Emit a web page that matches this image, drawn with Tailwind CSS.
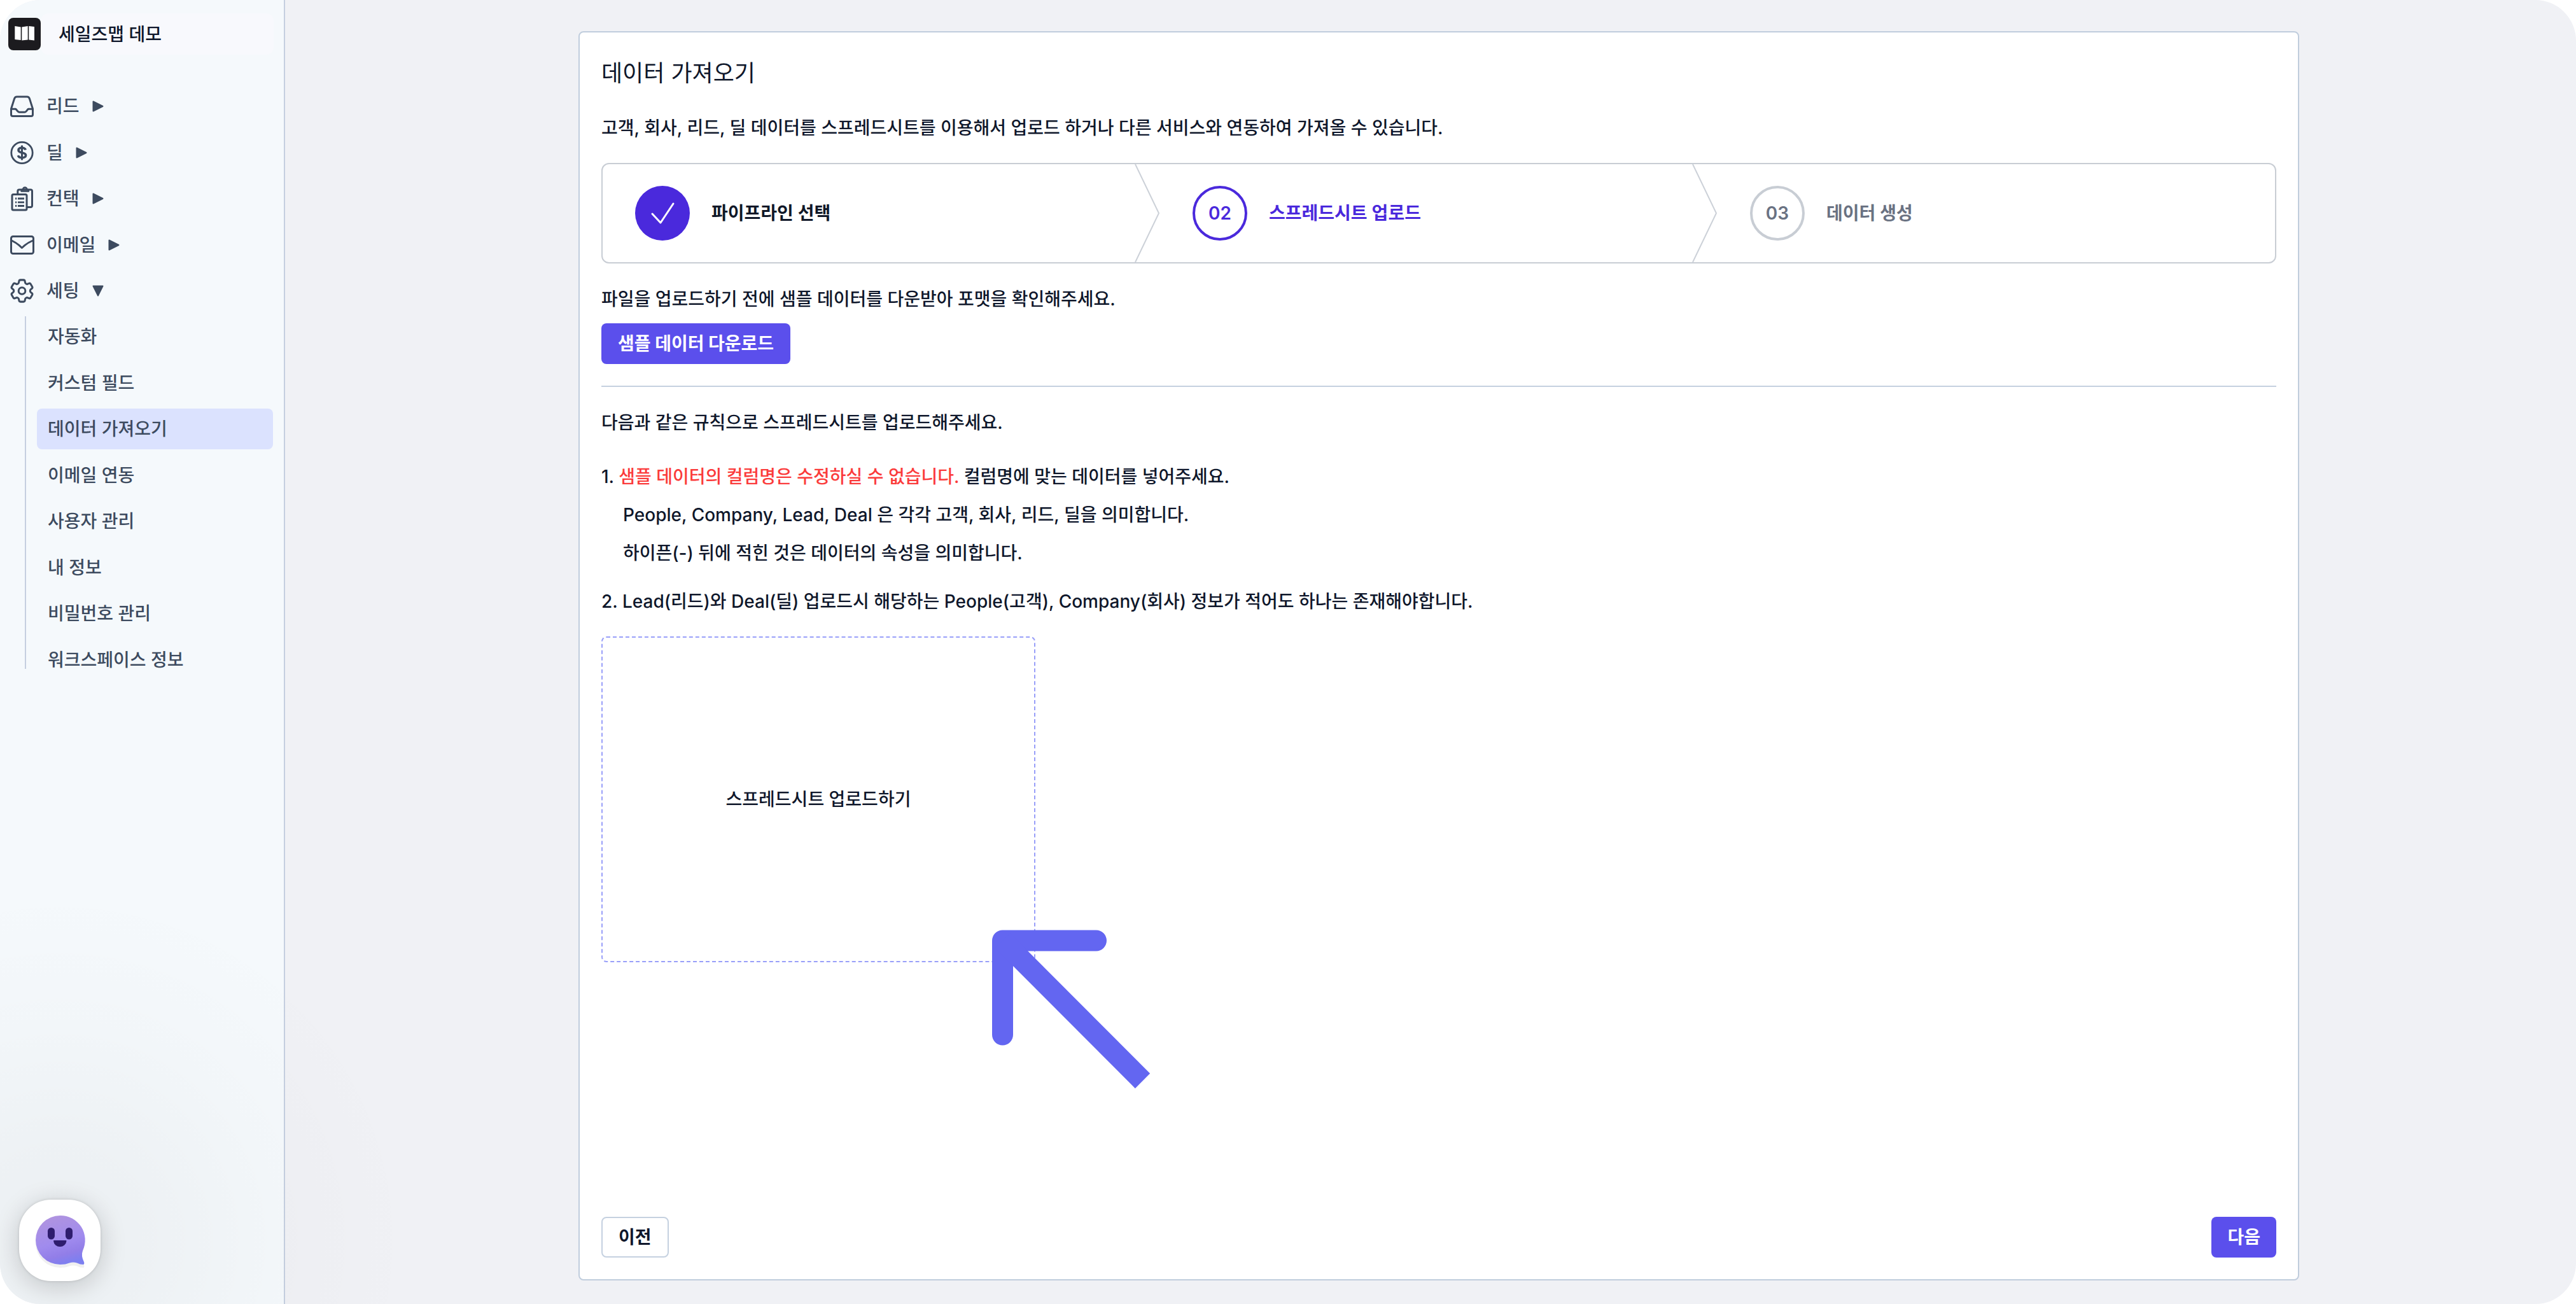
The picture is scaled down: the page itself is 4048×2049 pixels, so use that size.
<!DOCTYPE html>
<html lang="ko">
<head>
<meta charset="utf-8">
<meta name="viewport" content="width=device-width, initial-scale=1">
<title>데이터 가져오기</title>
<script src="https://cdn.jsdelivr.net/npm/@tailwindcss/browser@4"></script>
</head>
<body class="bg-white font-['Inter','Noto_Sans_CJK_KR',sans-serif] text-[28px] leading-[40px] font-medium text-slate-900">
<div class="relative flex min-h-screen overflow-hidden rounded-[64px] bg-[#f0f1f5]">

  <aside class="w-[448px] shrink-0 border-r-2 border-[#c5cfe0] bg-[#f5f9fc] text-[#3d4b5f]">
    <div class="flex items-center pt-[21px] pr-[16px] pl-[13px]">
      <svg class="size-[51px] shrink-0" viewBox="0 0 51 51" aria-hidden="true">
        <rect width="51" height="51" rx="8" fill="#1c1b1f"/>
        <path fill="#fff" d="M10.300 13l9.400 1.500v20.500l-9.400-1zM21.300 14.500l9.400-1.500v21.500l-9.400 1zM32.300 13l8.700 1v21.500l-8.700-1z"/>
      </svg>
      <div class="flex h-[65px] grow items-center rounded-[12px] bg-[#f8f9fd] pl-[28px] text-slate-900">세일즈맵 데모</div>
    </div>

    <nav class="pt-[49px]">
      <ul class="flex h-[354px] flex-col justify-between pl-[15px]">
        <li><a href="#" class="flex h-[64px] items-center gap-[18px]">
          <svg class="size-[40px]" viewBox="0 0 40 40" fill="none" stroke="currentColor" stroke-width="3" stroke-linejoin="round" aria-hidden="true">
            <path d="M2.500 24L7.600 8Q8.600 5 11.500 5h16q2.900 0 3.900 3l5.100 16v9q0 2.500-2.500 2.500H5q-2.500 0-2.500-2.500z"/>
            <path d="M2.500 24.300h7.200l3.300 3.800q1 1.200 2.500 1.200h8q1.500 0 2.500-1.200l3.300-3.800h7.200"/>
          </svg>
          <span>리드</span>
          <svg class="ml-[2px] size-[18px]" viewBox="0 0 18 18" aria-hidden="true"><path d="M1.500 1.500v15L16.500 9z" fill="currentColor" stroke="currentColor" stroke-width="2" stroke-linejoin="round"/></svg>
        </a></li>
        <li><a href="#" class="flex h-[64px] items-center gap-[18px]">
          <svg class="size-[40px]" viewBox="0 0 40 40" fill="none" stroke="currentColor" stroke-width="2.800" aria-hidden="true">
            <circle cx="19.500" cy="20" r="16.700"/>
            <path stroke-width="3.600" d="M25.300 15.500c-.8-2.300-3-3.300-5.800-3.300-3.200 0-5.500 1.300-5.500 3.700 0 5.400 11.600 2.600 11.600 8 0 2.500-2.600 3.900-6 3.900-3 0-5.500-1.200-6.200-3.600"/>
            <path stroke-width="3" d="M19.500 8.500v23"/>
          </svg>
          <span>딜</span>
          <svg class="ml-[2px] size-[18px]" viewBox="0 0 18 18" aria-hidden="true"><path d="M1.500 1.500v15L16.500 9z" fill="currentColor" stroke="currentColor" stroke-width="2" stroke-linejoin="round"/></svg>
        </a></li>
        <li><a href="#" class="flex h-[64px] items-center gap-[18px]">
          <svg class="size-[40px]" viewBox="0 0 40 40" fill="none" stroke="currentColor" stroke-width="3" stroke-linejoin="round" aria-hidden="true">
            <path d="M12.800 12V8.500q0-2.500 2.500-2.500H33q2.500 0 2.500 2.500V31q0 2.500-2.500 2.500h-5"/>
            <path fill="currentColor" fill-opacity="0.500" stroke-width="2.400" d="M18.500 8.500q0-2.500 2.500-3 .6-3 3.200-3t3.200 3q2.600.5 2.600 3z"/>
            <rect x="4" y="13.500" width="23" height="24.500" rx="2"/>
            <path stroke-width="2.800" d="M9 20h2.200M13 20H23M9 25.800h2.200M13 25.800H23M9 31.500h2.200M13 31.500H23"/>
          </svg>
          <span>컨택</span>
          <svg class="ml-[2px] size-[18px]" viewBox="0 0 18 18" aria-hidden="true"><path d="M1.500 1.500v15L16.500 9z" fill="currentColor" stroke="currentColor" stroke-width="2" stroke-linejoin="round"/></svg>
        </a></li>
        <li><a href="#" class="flex h-[64px] items-center gap-[18px]">
          <svg class="size-[40px]" viewBox="0 0 40 40" fill="none" stroke="currentColor" stroke-width="3" stroke-linejoin="round" aria-hidden="true">
            <rect x="2.500" y="6.500" width="35" height="27" rx="3"/>
            <path d="M2.500 12.500q8 4 12.500 7.800l4.400 4.200 4.600-4.200q5-4 13.500-7.800"/>
          </svg>
          <span>이메일</span>
          <svg class="ml-[2px] size-[18px]" viewBox="0 0 18 18" aria-hidden="true"><path d="M1.500 1.500v15L16.500 9z" fill="currentColor" stroke="currentColor" stroke-width="2" stroke-linejoin="round"/></svg>
        </a></li>
        <li><a href="#" class="flex h-[64px] items-center gap-[18px]" aria-expanded="true">
          <svg class="size-[40px]" viewBox="1.750 1.500 21 21" fill="none" stroke="currentColor" stroke-width="1.600" stroke-linejoin="round" aria-hidden="true">
            <path d="M9.594 3.940c.09-.542.56-.94 1.110-.94h2.593c.55 0 1.020.398 1.110.94l.213 1.281c.063.374.313.686.645.87.074.04.147.083.22.127.325.196.72.257 1.075.124l1.217-.456a1.125 1.125 0 0 1 1.370.49l1.296 2.247a1.125 1.125 0 0 1-.26 1.431l-1.003.827c-.293.241-.438.613-.43.992a7.723 7.723 0 0 1 0 .255c-.008.378.137.75.43.991l1.004.827c.424.35.534.955.26 1.430l-1.298 2.247a1.125 1.125 0 0 1-1.369.491l-1.217-.456c-.355-.133-.75-.072-1.076.124a6.470 6.470 0 0 1-.22.128c-.331.183-.581.495-.644.869l-.213 1.281c-.09.543-.56.94-1.110.94h-2.594c-.55 0-1.019-.398-1.110-.94l-.213-1.281c-.062-.374-.312-.686-.644-.87a6.520 6.520 0 0 1-.22-.127c-.325-.196-.72-.257-1.076-.124l-1.217.456a1.125 1.125 0 0 1-1.369-.49l-1.297-2.247a1.125 1.125 0 0 1 .26-1.431l1.004-.827c.292-.24.437-.613.43-.991a6.932 6.932 0 0 1 0-.255c.007-.38-.138-.751-.43-.992l-1.004-.827a1.125 1.125 0 0 1-.26-1.430l1.297-2.247a1.125 1.125 0 0 1 1.370-.491l1.216.456c.356.133.751.072 1.076-.124.072-.044.146-.086.22-.128.332-.183.582-.495.644-.869l.214-1.280Z"/>
            <circle cx="12" cy="12" r="2.800"/>
          </svg>
          <span>세팅</span>
          <svg class="ml-[2px] size-[18px]" viewBox="0 0 18 18" aria-hidden="true"><path d="M1.500 1.500h15L9 16.500z" fill="currentColor" stroke="currentColor" stroke-width="2" stroke-linejoin="round"/></svg>
        </a></li>
      </ul>

      <div class="mt-[8px] flex gap-[17px] pr-[17px] pl-[39px]">
        <div class="mb-[18px] w-[2px] bg-[#c5cfe0]"></div>
        <ul class="flex h-[572px] grow flex-col justify-between">
          <li><a href="#" class="flex h-[64px] items-center rounded-[8px] pl-[17px]">자동화</a></li>
          <li><a href="#" class="flex h-[64px] items-center rounded-[8px] pl-[17px]">커스텀 필드</a></li>
          <li><a href="#" class="flex h-[64px] items-center rounded-[8px] bg-[#dbe2fe] pl-[17px]" aria-current="page">데이터 가져오기</a></li>
          <li><a href="#" class="flex h-[64px] items-center rounded-[8px] pl-[17px]">이메일 연동</a></li>
          <li><a href="#" class="flex h-[64px] items-center rounded-[8px] pl-[17px]">사용자 관리</a></li>
          <li><a href="#" class="flex h-[64px] items-center rounded-[8px] pl-[17px]">내 정보</a></li>
          <li><a href="#" class="flex h-[64px] items-center rounded-[8px] pl-[17px]">비밀번호 관리</a></li>
          <li><a href="#" class="flex h-[64px] items-center rounded-[8px] pl-[17px]">워크스페이스 정보</a></li>
        </ul>
      </div>
    </nav>
  </aside>

  <main class="flex grow justify-center pt-[49px] pb-[37px] pl-[26px]">
    <section class="flex w-full max-w-[2704px] flex-col rounded-[8px] border-2 border-[#c0cddd] bg-white px-[34px] pt-[40px] pb-[34px]">
      <h1 class="text-[36px] leading-[48px] font-normal">데이터 가져오기</h1>
      <p class="mt-[42px]">고객, 회사, 리드, 딜 데이터를 스프레드시트를 이용해서 업로드 하거나 다른 서비스와 연동하여 가져올 수 있습니다.</p>

      <ol class="mt-[35px] grid grid-cols-3 rounded-[12px] border-2 border-[#c8cdd4]">
        <li class="flex h-[154px] items-center gap-[34px] pl-[51px] font-semibold text-gray-900">
          <span class="flex size-[86px] items-center justify-center rounded-full bg-[#4a29dc]">
            <svg class="size-[50px]" viewBox="0 0 50 50" fill="none" stroke="#fff" stroke-width="3" stroke-linecap="round" stroke-linejoin="round" aria-hidden="true"><path d="M9 26l13 14L42 10"/></svg>
          </span>
          파이프라인 선택
          <svg class="ml-auto h-full w-[40px]" viewBox="0 0 40 154" fill="none" stroke="#ccd1d8" stroke-width="2" aria-hidden="true"><path d="M1 0l37 77L1 154"/></svg>
        </li>
        <li class="flex h-[154px] items-center gap-[34px] pl-[51px] font-semibold text-[#4a29dc]" aria-current="step">
          <span class="flex size-[86px] items-center justify-center rounded-full border-4 border-[#4a29dc]">02</span>
          스프레드시트 업로드
          <svg class="ml-auto h-full w-[40px]" viewBox="0 0 40 154" fill="none" stroke="#ccd1d8" stroke-width="2" aria-hidden="true"><path d="M1 0l37 77L1 154"/></svg>
        </li>
        <li class="flex h-[154px] items-center gap-[34px] pl-[51px] font-semibold text-gray-500">
          <span class="flex size-[86px] items-center justify-center rounded-full border-4 border-[#c8cdd4]">03</span>
          데이터 생성
        </li>
      </ol>

      <p class="mt-[36px]">파일을 업로드하기 전에 샘플 데이터를 다운받아 포맷을 확인해주세요.</p>
      <button type="button" class="mt-[18px] h-[64px] self-start rounded-[8px] bg-[#5b4fec] px-[26px] font-bold text-white">샘플 데이터 다운로드</button>
      <hr class="mt-[34px] border-t-2 border-[#c5d1e0]">

      <p class="mt-[36px]">다음과 같은 규칙으로 스프레드시트를 업로드해주세요.</p>
      <div class="mt-[35px] leading-[60px]">
        <p>1. <span class="text-[#fb3b3b]">샘플 데이터의 컬럼명은 수정하실 수 없습니다.</span> 컬럼명에 맞는 데이터를 넣어주세요.</p>
        <p class="pl-[34px]">People, Company, Lead, Deal 은 각각 고객, 회사, 리드, 딜을 의미합니다.</p>
        <p class="pl-[34px]">하이픈(-) 뒤에 적힌 것은 데이터의 속성을 의미합니다.</p>
        <p class="mt-[16px]">2. Lead(리드)와 Deal(딜) 업로드시 해당하는 People(고객), Company(회사) 정보가 적어도 하나는 존재해야합니다.</p>
      </div>

      <div class="relative mt-[25px] mb-[34px] self-start">
        <label for="sheet" class="flex h-[512px] w-[682px] items-center justify-center rounded-[8px] border-2 border-dashed border-[#999ff9]">스프레드시트 업로드하기</label>
        <input id="sheet" type="file" class="sr-only">
        <svg class="absolute top-[461px] left-[614px] h-[250px] w-[250px]" viewBox="0 0 250 250" fill="none" stroke="#6366f1" stroke-width="33" stroke-linejoin="round" aria-hidden="true">
          <path stroke-linecap="round" d="M163.500 17H16.500v148"/><path d="M16.500 17l220 220.500"/>
        </svg>
      </div>

      <div class="mt-auto flex justify-between">
        <button type="button" class="h-[64px] rounded-[8px] border-2 border-[#c5d1e0] px-[25px] font-bold">이전</button>
        <button type="button" class="h-[64px] rounded-[8px] bg-[#5b4fec] px-[25px] font-bold text-white">다음</button>
      </div>
    </section>
  </main>

  <!-- soft glow behind the chat launcher -->
  <div class="pointer-events-none absolute bottom-[-460px] left-[-466px] size-[1120px] rounded-full bg-[radial-gradient(closest-side,rgba(0,0,0,0.040),rgba(0,0,0,0.030)_25%,rgba(0,0,0,0.010)_62%,transparent)]"></div>
  <button type="button" aria-label="채팅 상담" class="absolute bottom-[36px] left-[30px] size-[128px] rounded-[50px] bg-white shadow-[0_8px_40px_rgba(0,0,0,0.18),0_0_4px_rgba(0,0,0,0.15)]">
    <svg viewBox="0 0 128 128" aria-hidden="true">
      <defs>
        <linearGradient id="bubble" x1="0.300" y1="0" x2="0.600" y2="1">
          <stop offset="0" stop-color="#b094df"/><stop offset="0.550" stop-color="#a08bee"/><stop offset="0.800" stop-color="#927ee8"/><stop offset="1" stop-color="#7c7ff0"/>
        </linearGradient>
      </defs>
      <path fill="#000" opacity="0.060" transform="translate(0 5)" d="M64.500 25A38.300 38.300 0 0 0 64.500 102Q73 102 79 99.500Q85 97.500 91 99.500Q96 102 101 102Q103 101 102 98Q97 88 99 80A38.300 38.300 0 0 0 64.500 25z"/>
      <path fill="url(#bubble)" d="M64.500 25A38.500 38.500 0 0 0 64.500 102Q73 102 79 99.500Q85 97.500 91 99.500Q96 102 101 102Q103 101 102 98Q97 88 100 80A38.500 38.500 0 0 0 64.500 25z"/>
      <g fill="#2f1d6e"><rect x="45" y="44" width="11" height="18.500" rx="5.500"/><rect x="73" y="44" width="11" height="18.500" rx="5.500"/><path d="M54 65q0-1 1-1h18.500q1 0 1 1a10.300 10 0 0 1-20.500 0z"/></g>
    </svg>
  </button>
</div>
</body>
</html>
